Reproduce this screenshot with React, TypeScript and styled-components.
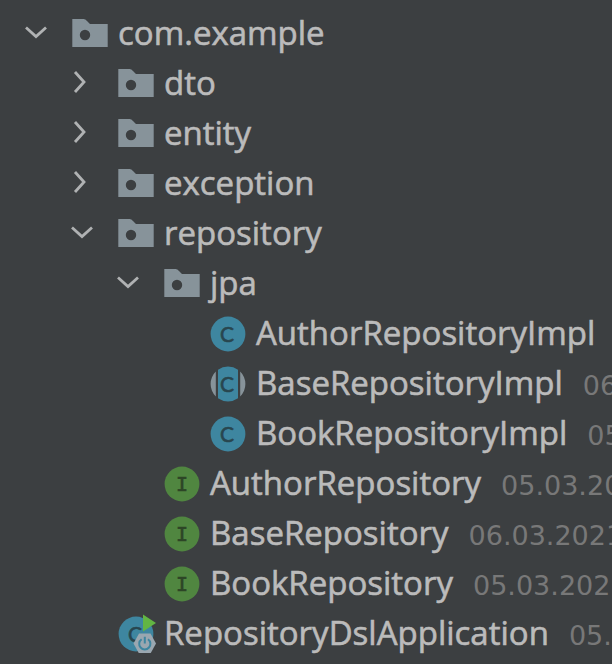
import React, { useState } from "react";
import styled, { createGlobalStyle } from "styled-components";

const GlobalStyle = createGlobalStyle`
  body {
    margin: 0;
    background: #3c3f41;
    color: #bbbbbb;
    font-family: "Open Sans", "Noto Sans", sans-serif;
  }
`;

type IconKind = "package" | "class" | "abstract" | "interface" | "application";

interface TreeNode {
  name: string;
  icon: IconKind;
  date?: string;
  open?: boolean;
  children?: TreeNode[];
}

const project: TreeNode[] = [
  {
    name: "com.example",
    icon: "package",
    open: true,
    children: [
      { name: "dto", icon: "package", children: [] },
      { name: "entity", icon: "package", children: [] },
      { name: "exception", icon: "package", children: [] },
      {
        name: "repository",
        icon: "package",
        open: true,
        children: [
          {
            name: "jpa",
            icon: "package",
            open: true,
            children: [
              { name: "AuthorRepositoryImpl", icon: "class" },
              { name: "BaseRepositoryImpl", icon: "abstract", date: "06.03.2021" },
              { name: "BookRepositoryImpl", icon: "class", date: "05.03.2021" },
            ],
          },
          { name: "AuthorRepository", icon: "interface", date: "05.03.2021" },
          { name: "BaseRepository", icon: "interface", date: "06.03.2021" },
          { name: "BookRepository", icon: "interface", date: "05.03.2021" },
        ],
      },
      { name: "RepositoryDslApplication", icon: "application", date: "05.03.2021" },
    ],
  },
];

const Panel = styled.nav`
  padding: 8px 0 0 16px;
  overflow: hidden;
`;

const Branch = styled.ul<{ $nested?: boolean }>`
  list-style: none;
  margin: 0;
  padding: 0 0 0 ${(p) => (p.$nested ? 46 : 0)}px;
`;

const Row = styled.div`
  display: flex;
  align-items: center;
  height: 50px;
  white-space: nowrap;
`;

const Toggle = styled.button`
  flex: none;
  width: 40px;
  height: 40px;
  margin: 0 14px 0 0;
  padding: 0;
  border: 0;
  background: none;
  color: inherit;
`;

const ToggleSpace = styled.span`
  flex: none;
  width: 54px;
`;

const Glyph = styled.svg`
  display: block;
  flex: none;
  width: 40px;
  height: 40px;
`;

const Letter = styled.text<{ $serif?: boolean }>`
  font-family: ${(p) => (p.$serif ? '"DejaVu Sans Mono", monospace' : '"Lato", sans-serif')};
  font-size: ${(p) => (p.$serif ? 20 : 21)}px;
  font-weight: 400;
  text-anchor: middle;
  fill: ${(p) => (p.$serif ? "#2d4526" : "#28464f")};
  stroke: ${(p) => (p.$serif ? "#2d4526" : "#28464f")};
  stroke-width: 0.6px;
`;

const Label = styled.div`
  display: flex;
  align-items: baseline;
  gap: 20px;
  margin-left: 8px;
  line-height: 50px;
`;

const Name = styled.span`
  font-size: 33px;
  -webkit-text-stroke: 0.6px #bbbbbb;
`;

const Modified = styled.time`
  font-family: "DejaVu Sans", sans-serif;
  font-size: 27px;
  line-height: 28px;
  color: #787878;
`;

function Chevron({ open }: { open: boolean }) {
  return (
    <Glyph viewBox="0 0 40 40" aria-hidden="true">
      <path
        d={open ? "M10 14.5L20 23.5L30 14.5" : "M13 9L22 19L13 29"}
        fill="none"
        stroke="#b0b2b3"
        strokeWidth="2.8"
      />
    </Glyph>
  );
}

function NodeIcon({ kind }: { kind: IconKind }) {
  return (
    <Glyph viewBox="0 0 40 40" aria-hidden="true">
      {kind === "package" && (
        <path
          fill="#87939a"
          fillRule="evenodd"
          d="M2.3 6H13.5Q15.5 6 17 8L20 11H37.7V34H2.3ZM15 16.8A5.2 5.2 0 1 0 15 27.2A5.2 5.2 0 1 0 15 16.8Z"
        />
      )}
      {kind === "class" && (
        <>
          <circle cx="20" cy="21" r="17.4" fill="#3e86a0" />
          <Letter x="19" y="28.5">C</Letter>
        </>
      )}
      {kind === "abstract" && (
        <>
          <path d="M7.8 8.6A17.4 17.4 0 0 0 7.8 33.4ZM32.2 8.6A17.4 17.4 0 0 1 32.2 33.4Z" fill="#87939a" />
          <path d="M10 6.7A17.4 17.4 0 0 1 30 6.7V35.3A17.4 17.4 0 0 1 10 35.3Z" fill="#3e86a0" />
          <Letter x="19" y="28.5">C</Letter>
        </>
      )}
      {kind === "interface" && (
        <>
          <circle cx="20" cy="21" r="17.4" fill="#508640" />
          <Letter $serif x="20" y="28">I</Letter>
        </>
      )}
      {kind === "application" && (
        <>
          <circle cx="20" cy="21" r="17.4" fill="#3e86a0" />
          <Letter x="19" y="28.5">C</Letter>
          <path d="M27 1.5L40 10L27 18.5Z" fill="#62b543" />
          <path d="M23 20.5H34.5L40 30.5L34.5 40.5H23L17.5 30.5Z" fill="#9aa7b0" />
          <path d="M25.6 26.2A5.6 5.6 0 1 0 32 26.2M28.8 23.8V30.5" fill="none" stroke="#3e86a0" strokeWidth="2" />
        </>
      )}
    </Glyph>
  );
}

function TreeItem({ node }: { node: TreeNode }) {
  const [open, setOpen] = useState(Boolean(node.open));
  return (
    <li>
      <Row>
        {node.children ? (
          <Toggle
            type="button"
            aria-label={node.name}
            aria-expanded={open}
            onClick={() => setOpen(!open)}
          >
            <Chevron open={open} />
          </Toggle>
        ) : (
          <ToggleSpace />
        )}
        <NodeIcon kind={node.icon} />
        <Label>
          <Name>{node.name}</Name>
          {node.date && <Modified>{node.date}</Modified>}
        </Label>
      </Row>
      {open && node.children && node.children.length > 0 && (
        <Branch $nested>
          {node.children.map((child) => (
            <TreeItem key={child.name} node={child} />
          ))}
        </Branch>
      )}
    </li>
  );
}

export default function App() {
  return (
    <>
      <GlobalStyle />
      <Panel aria-label="Project">
        <Branch>
          {project.map((node) => (
            <TreeItem key={node.name} node={node} />
          ))}
        </Branch>
      </Panel>
    </>
  );
}
